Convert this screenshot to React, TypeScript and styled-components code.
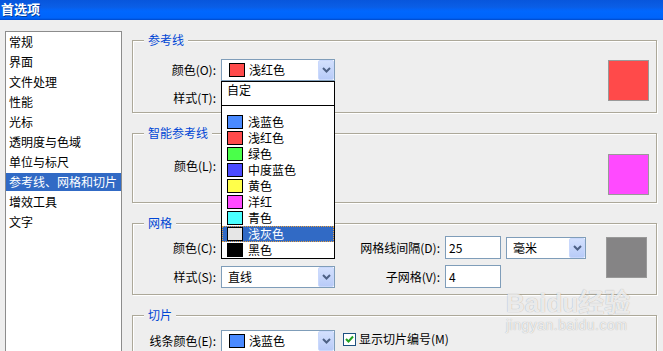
import * as React from 'react'
import styled, { createGlobalStyle } from 'styled-components'

const FONT = `"Noto Sans CJK SC", "Noto Sans", "DejaVu Sans", sans-serif`

const GUIDE_COLORS = [
  { name: '浅蓝色', hex: '#4a8aff' },
  { name: '浅红色', hex: '#ff4a4a' },
  { name: '绿色', hex: '#4aff4a' },
  { name: '中度蓝色', hex: '#4a4aff' },
  { name: '黄色', hex: '#ffff4a' },
  { name: '洋红', hex: '#ff4aff' },
  { name: '青色', hex: '#4affff' },
  { name: '浅灰色', hex: '#e6e6e6' },
  { name: '黑色', hex: '#000000' },
]

const CATEGORIES = [
  '常规',
  '界面',
  '文件处理',
  '性能',
  '光标',
  '透明度与色域',
  '单位与标尺',
  '参考线、网格和切片',
  '增效工具',
  '文字',
]

const GlobalStyle = createGlobalStyle`
  html, body {
    margin: 0;
    padding: 0;
    background: #eeeeee;
  }
  body {
    font-family: ${FONT};
    font-size: 12px;
    color: #000;
  }
`

const Window = styled.div`
  position: relative;
  width: 663px;
  height: 351px;
  overflow: hidden;
  background: #eeeeee;
  display: flex;
  flex-direction: column;
`

const TitleBar = styled.div`
  flex: none;
  height: 20px;
  box-sizing: border-box;
  padding-left: 1px;
  background: linear-gradient(
    #0856dc 0%,
    #0a5ee6 35%,
    #0067ff 55%,
    #0064fa 90%,
    #0048c8 100%
  );
  color: #fff;
  font-size: 13px;
  font-weight: bold;
  line-height: 18px;
  text-shadow: 1px 1px 0 #003c9c;
`

const Body = styled.div`
  flex: 1;
  min-height: 0;
  display: flex;
  align-items: flex-start;
  gap: 10px;
  padding: 11px 6px 0 5px;
`

const CategoryList = styled.ul`
  flex: none;
  list-style: none;
  margin: 0;
  padding: 1px 0 0;
  width: 117px;
  height: 400px;
  box-sizing: border-box;
  border: 1px solid #8c8c8c;
  background: #fff;
  display: flex;
  flex-direction: column;
  gap: 2px;
`

const CategoryItem = styled.li<{ $active?: boolean }>`
  height: 18px;
  line-height: 18px;
  padding-left: 3px;
  white-space: nowrap;
  background: ${({ $active }) => ($active ? '#316ac5' : 'transparent')};
  color: ${({ $active }) => ($active ? '#fff' : '#000')};
`

const Content = styled.div`
  flex: 1;
  margin-top: 9px;
  display: flex;
  flex-direction: column;
  gap: 20px;
`

const GroupBox = styled.section<{ $h: number; $pt: number; $pr?: number }>`
  position: relative;
  flex: none;
  box-sizing: border-box;
  height: ${({ $h }) => $h}px;
  padding: ${({ $pt, $pr = 7 }) => `${$pt}px ${$pr}px 0 0`};
  border: 1px solid #aca899;
  box-shadow: 1px 1px 0 #fff, inset 1px 1px 0 #fff;
  display: flex;
  align-items: flex-start;
  gap: 8px;
`

const GroupTitle = styled.span`
  position: absolute;
  top: -9px;
  left: 11px;
  padding: 0 4px;
  line-height: 16px;
  background: #eeeeee;
  color: #0046d5;
`

const FormGrid = styled.div<{ $cols: string; $rowH: number; $rowGap: number }>`
  display: grid;
  grid-template-columns: ${({ $cols }) => $cols};
  grid-auto-rows: ${({ $rowH }) => $rowH}px;
  column-gap: 5px;
  row-gap: ${({ $rowGap }) => $rowGap}px;
  align-items: center;
`

const Label = styled.label`
  text-align: right;
  white-space: nowrap;
  line-height: 16px;
`

const SelectWrap = styled.div`
  position: relative;
`

const SelectBox = styled.div<{ $pl?: number }>`
  box-sizing: border-box;
  height: 22px;
  border: 1px solid #7f9db9;
  background: #fff;
  display: flex;
  align-items: center;
  gap: 4px;
  padding-left: ${({ $pl = 6 }) => $pl}px;
`

const SelectValue = styled.span`
  flex: 1;
  white-space: nowrap;
  line-height: 16px;
`

const ArrowButton = styled.span`
  flex: none;
  align-self: stretch;
  width: 16px;
  box-sizing: border-box;
  border: 1px solid #c9d8fc;
  border-radius: 2px;
  background: linear-gradient(#d3e0fd, #b8cbf8);
  display: flex;
  align-items: center;
  justify-content: center;
`

const Chip = styled.span<{ $color: string }>`
  flex: none;
  width: 16px;
  height: 14px;
  box-sizing: border-box;
  border: 1px solid #000;
  background: ${({ $color }) => $color};
`

const Popup = styled.ul`
  position: absolute;
  top: 100%;
  left: 0;
  right: 0;
  z-index: 10;
  margin: 0;
  padding: 0;
  list-style: none;
  border: 1px solid #000;
  background: #fff;
`

const PopupItem = styled.li<{ $active?: boolean }>`
  height: 16px;
  display: flex;
  align-items: center;
  gap: 5px;
  padding-left: 5px;
  line-height: 16px;
  white-space: nowrap;
  background: ${({ $active }) => ($active ? '#316ac5' : 'transparent')};
  color: ${({ $active }) => ($active ? '#fff' : '#000')};
  outline: ${({ $active }) => ($active ? '1px dotted #e8a040' : 'none')};
  outline-offset: -1px;
`

const PopupSeparator = styled.li`
  height: 7px;
  margin-bottom: 8px;
  border-bottom: 1px solid #000;
`

const TextInput = styled.div`
  box-sizing: border-box;
  height: 23px;
  border: 1px solid #7f9db9;
  background: #fff;
  padding-left: 3px;
  line-height: 21px;
`

const ColorPreview = styled.div<{ $color: string; $mt: number }>`
  flex: none;
  margin-left: auto;
  margin-top: ${({ $mt }) => $mt}px;
  width: 41px;
  height: 41px;
  box-sizing: border-box;
  border: 1px solid #999;
  background: ${({ $color }) => $color};
`

const CheckRow = styled.label`
  display: flex;
  align-items: center;
  gap: 3px;
  margin-top: 1px;
  white-space: nowrap;
  line-height: 16px;
`

const CheckBox = styled.span`
  flex: none;
  width: 13px;
  height: 13px;
  box-sizing: border-box;
  border: 1px solid #1c5180;
  background: #fff;
  display: flex;
  align-items: center;
  justify-content: center;
`

const Watermark = styled.div`
  position: absolute;
  left: 506px;
  top: 288px;
  color: rgba(255, 255, 255, 0.8);
  text-shadow: 0 0 1px rgba(0, 0, 0, 0.35);
  pointer-events: none;
`

const WatermarkLogo = styled.div`
  font-family: "Liberation Sans", ${FONT};
  font-size: 26px;
  font-weight: bold;
  line-height: 30px;
  white-space: nowrap;
`

const WatermarkUrl = styled.div`
  font-family: "Liberation Sans", sans-serif;
  font-size: 14px;
  line-height: 14px;
  letter-spacing: 0.5px;
  white-space: nowrap;
`

const Chevron: React.FC = () => (
  <svg width="9" height="6" viewBox="0 0 9 6">
    <path d="M1 1l3.5 3.5L8 1" fill="none" stroke="#4d6185" strokeWidth="2" />
  </svg>
)

interface SelectProps {
  value?: string
  color?: string
  open?: boolean
  selected?: string
}

// value is left out for the boxes that lie under the open list
const Select: React.FC<SelectProps> = ({ value, color, open, selected }) => (
  <SelectWrap>
    <SelectBox $pl={color ? 7 : 6}>
      {color && <Chip $color={color} />}
      <SelectValue>{value}</SelectValue>
      <ArrowButton>
        <Chevron />
      </ArrowButton>
    </SelectBox>
    {open && (
      <Popup>
        <PopupItem>自定</PopupItem>
        <PopupSeparator />
        {GUIDE_COLORS.map((c) => (
          <PopupItem key={c.name} $active={c.name === selected}>
            <Chip $color={c.hex} />
            {c.name}
          </PopupItem>
        ))}
      </Popup>
    )}
  </SelectWrap>
)

const App: React.FC = () => {
  return (
    <Window>
      <GlobalStyle />
      <TitleBar>首选项</TitleBar>
      <Body>
        <CategoryList>
          {CATEGORIES.map((name) => (
            <CategoryItem key={name} $active={name === '参考线、网格和切片'}>
              {name}
            </CategoryItem>
          ))}
        </CategoryList>

        <Content>
          <GroupBox $h={73} $pt={18}>
            <GroupTitle>参考线</GroupTitle>
            <FormGrid $cols="83px 114px" $rowH={22} $rowGap={6}>
              <Label>颜色(O):</Label>
              <Select value="浅红色" color="#ff4a4a" open selected="浅灰色" />
              <Label>样式(T):</Label>
              <Select />
            </FormGrid>
            <ColorPreview $color="#ff4a4a" $mt={1} />
          </GroupBox>

          <GroupBox $h={70} $pt={21}>
            <GroupTitle>智能参考线</GroupTitle>
            <FormGrid $cols="83px 114px" $rowH={22} $rowGap={6}>
              <Label>颜色(L):</Label>
              <Select />
            </FormGrid>
            <ColorPreview $color="#ff4aff" $mt={-1} />
          </GroupBox>

          <GroupBox $h={72} $pt={12} $pr={9}>
            <GroupTitle>网格</GroupTitle>
            <FormGrid $cols="83px 114px 100px 56px 80px" $rowH={23} $rowGap={6}>
              <Label>颜色(C):</Label>
              <Select />
              <Label>网格线间隔(D):</Label>
              <TextInput>25</TextInput>
              <Select value="毫米" />
              <Label>样式(S):</Label>
              <Select value="直线" />
              <Label>子网格(V):</Label>
              <TextInput>4</TextInput>
            </FormGrid>
            <ColorPreview $color="#858485" $mt={1} />
          </GroupBox>

          <GroupBox $h={60} $pt={14}>
            <GroupTitle>切片</GroupTitle>
            <FormGrid $cols="83px 114px" $rowH={22} $rowGap={6}>
              <Label>线条颜色(E):</Label>
              <Select value="浅蓝色" color="#4a8aff" />
            </FormGrid>
            <CheckRow>
              <CheckBox>
                <svg width="9" height="8" viewBox="0 0 9 8">
                  <path d="M1 4l2.5 2.5L8 1.5" fill="none" stroke="#21a121" strokeWidth="2" />
                </svg>
              </CheckBox>
              显示切片编号(M)
            </CheckRow>
          </GroupBox>
        </Content>
      </Body>

      <Watermark>
        <WatermarkLogo>Baidu经验</WatermarkLogo>
        <WatermarkUrl>jingyan.baidu.com</WatermarkUrl>
      </Watermark>
    </Window>
  )
}

export default App
